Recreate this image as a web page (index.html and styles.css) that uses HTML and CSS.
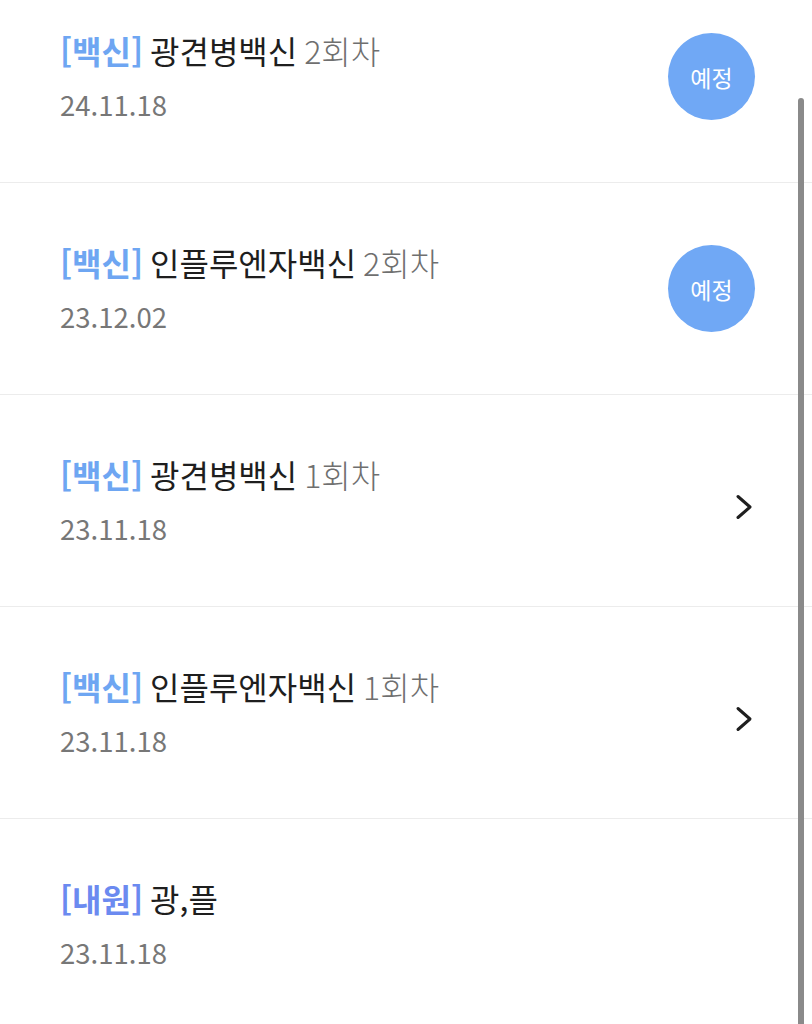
FILE: index.html
```html
<!DOCTYPE html>
<html lang="ko">
<head>
<meta charset="utf-8">
<link rel="stylesheet" href="styles.css">
</head>
<body>
<div class="screen">
  <ul class="list">
    <li class="row">
      <div class="info">
        <div class="title"><span class="tag">[백신]</span> <span class="name">광견병백신</span> <span class="count">2회차</span></div>
        <div class="date">24.11.18</div>
      </div>
      <span class="badge">예정</span>
    </li>
    <li class="row">
      <div class="info">
        <div class="title"><span class="tag">[백신]</span> <span class="name">인플루엔자백신</span> <span class="count">2회차</span></div>
        <div class="date">23.12.02</div>
      </div>
      <span class="badge">예정</span>
    </li>
    <li class="row">
      <div class="info">
        <div class="title"><span class="tag">[백신]</span> <span class="name">광견병백신</span> <span class="count">1회차</span></div>
        <div class="date">23.11.18</div>
      </div>
      <svg class="chevron" viewBox="0 0 18 26" width="18" height="26"><path d="M3 2.5 L15 13 L3 23.5" fill="none" stroke="#1f1f1f" stroke-width="3" stroke-linecap="round" stroke-linejoin="round"/></svg>
    </li>
    <li class="row">
      <div class="info">
        <div class="title"><span class="tag">[백신]</span> <span class="name">인플루엔자백신</span> <span class="count">1회차</span></div>
        <div class="date">23.11.18</div>
      </div>
      <svg class="chevron" viewBox="0 0 18 26" width="18" height="26"><path d="M3 2.5 L15 13 L3 23.5" fill="none" stroke="#1f1f1f" stroke-width="3" stroke-linecap="round" stroke-linejoin="round"/></svg>
    </li>
    <li class="row">
      <div class="info">
        <div class="title"><span class="tag tag-visit">[내원]</span> <span class="name">광,플</span></div>
        <div class="date">23.11.18</div>
      </div>
    </li>
  </ul>
  <div class="scrollbar"></div>
</div>
</body>
</html>
```
FILE: styles.css
```css
html, body {
  margin: 0;
  padding: 0;
  background: #ffffff;
}
body {
  font-family: "Noto Sans CJK KR", "Noto Sans", sans-serif;
  overflow: hidden;
  height: 1024px;
}
.screen {
  position: relative;
  height: 1024px;
  overflow: hidden;
}
.list {
  list-style: none;
  margin: -29px 0 0 0;
  padding: 0;
}
.row {
  display: flex;
  align-items: center;
  justify-content: space-between;
  height: 211px;
  box-sizing: content-box;
  padding: 0 58px 0 60px;
  border-bottom: 1.5px solid #ececec;
}
.info {
  display: flex;
  flex-direction: column;
  gap: 14px;
}
.title {
  font-size: 32px;
  line-height: 40px;
  color: #1e1e1e;
  white-space: nowrap;
  word-spacing: -2px;
}
.tag {
  color: #6ea6f2;
  font-weight: 700;
}
.tag-visit {
  color: #6b8af0;
}
.name {
  font-weight: 400;
}
.count {
  color: #6f6f6f;
  font-weight: 300;
}
.date {
  font-size: 27.5px;
  line-height: 40px;
  color: #777777;
}
.badge {
  display: flex;
  align-items: center;
  justify-content: center;
  width: 87px;
  height: 87px;
  border-radius: 50%;
  background: #70a8f5;
  color: #ffffff;
  font-size: 23px;
  font-weight: 400;
  margin-right: -1px;
}
.chevron {
  margin-top: 12px;
  margin-right: 1px;
}
.scrollbar {
  position: absolute;
  right: 8px;
  top: 98px;
  width: 6px;
  height: 940px;
  border-radius: 3px;
  background: #8a8a8a;
}
```
